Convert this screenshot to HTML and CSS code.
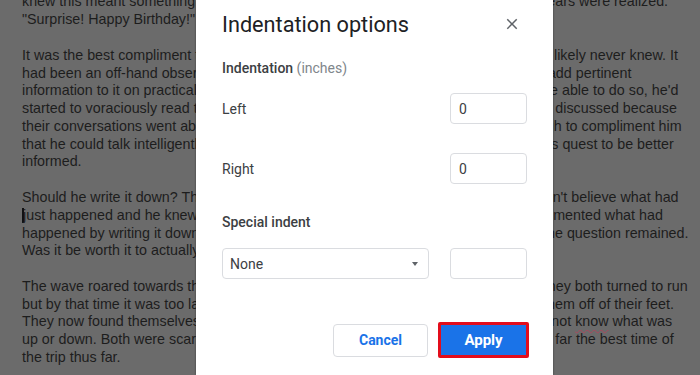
FILE: index.html
```html
<!DOCTYPE html>
<html lang="en">
<head>
<meta charset="utf-8">
<title>Indentation options</title>
<link rel="stylesheet" href="styles.css">
</head>
<body>
<div class="doc">
  <p>knew this meant something was about to happen and in that moment all her worst fears were realized.<br>"Surprise! Happy Birthday!"</p>
  <p>It was the best compliment that he'd ever received, although the person who gave it likely never knew. It<br>had been an off-hand observation on his unusual ability to hold a conversation and add pertinent<br>information to it on practically any topic. Although he hadn't consciously worked to be able to do so, he'd<br>started to voraciously read the news and view documentaries on all the topics being discussed because<br>their conversations went above his head. Soon, people were often impressed enough to compliment him<br>that he could talk intelligently on almost any topic, which was the direct product of his quest to be better<br>informed.</p>
  <p>Should he write it down? That was the question spinning through his mind. He couldn't believe what had<br><span class="caret"></span>just happened and he knew no one else would ever believe him unless he had documented what had<br>happened by writing it down. He knew everyone would still think he was crazy, yet the question remained.<br>Was it be worth it to actually write it down?</p>
  <p>The wave roared towards them with speed and intensity they had not anticipated. They both turned to run<br>but by that time it was too late. The wave crashed hard into both of them knocking them off of their feet.<br>They now found themselves in a churning washing machine of salt water and could not <span class="misspelled">know</span> what was<br>up or down. Both were scared, but they both smiled and agreed that this was still by far the best time of<br>the trip thus far.</p>
</div>

<div class="dialog">
  <div class="header">
    <div class="title">Indentation options</div>
    <svg class="close" viewBox="0 0 24 24" aria-hidden="true"><path d="M19 6.41L17.59 5 12 10.59 6.41 5 5 6.41 10.59 12 5 17.59 6.41 19 12 13.41 17.59 19 19 17.59 13.41 12z" fill="currentColor"/></svg>
  </div>
  <div class="section">Indentation <span class="muted">(inches)</span></div>
  <div class="row row-left">
    <span class="label">Left</span>
    <div class="input">0</div>
  </div>
  <div class="row row-right">
    <span class="label">Right</span>
    <div class="input">0</div>
  </div>
  <div class="section section-special">Special indent</div>
  <div class="row row-select">
    <div class="select"><span>None</span><span class="arrow"></span></div>
    <div class="input"></div>
  </div>
  <div class="footer">
    <div class="btn btn-cancel">Cancel</div>
    <div class="btn btn-apply">Apply</div>
  </div>
</div>
</body>
</html>
```

FILE: styles.css
```css
html, body {
  margin: 0;
  padding: 0;
}
body {
  display: flow-root;
  width: 700px;
  height: 375px;
  overflow: hidden;
  position: relative;
  background: #6b6b6b;
  font-family: "Liberation Sans", Arial, sans-serif;
}
.doc {
  padding-left: 22px;
  margin-top: -6.6px;
  font-size: 14.3px;
  line-height: 17.78px;
  color: #1d1d1d;
  white-space: nowrap;
}
.doc p {
  margin: 0 0 17.78px;
}
.caret {
  display: inline-block;
  width: 0;
  height: 15px;
  border-left: 2px solid #111;
  margin-right: -1px;
  vertical-align: -3px;
}
.misspelled {
  text-decoration: underline wavy #a8475c;
  text-decoration-thickness: 1px;
  text-underline-offset: 3px;
}

.dialog {
  position: absolute;
  top: 0;
  left: 196px;
  width: 357px;
  height: 375px;
  box-sizing: border-box;
  padding: 0 26px;
  background: #fff;
  box-shadow: 0 0 2px rgba(0, 0, 0, 0.45);
  font-family: Roboto, "Liberation Sans", sans-serif;
  display: flex;
  flex-direction: column;
  color: #3c4043;
}
.header {
  height: 48px;
  flex-shrink: 0;
  display: flex;
  align-items: center;
  justify-content: space-between;
}
.title {
  font-size: 21.7px;
  color: #202124;
}
.close {
  width: 18px;
  height: 18px;
  margin-right: 6px;
  color: #5f6368;
}
.section {
  margin-top: 10px;
  line-height: 20px;
  font-size: 14px;
  font-weight: 500;
  color: #3c4043;
}
.muted {
  color: #80868b;
  font-weight: 400;
}
.section-special {
  margin-top: 28px;
}
.row {
  display: flex;
  align-items: center;
  justify-content: space-between;
  height: 31px;
  flex-shrink: 0;
}
.row-left {
  margin-top: 15px;
}
.row-right {
  margin-top: 29px;
}
.row-select {
  margin-top: 16px;
}
.label {
  font-size: 14px;
  color: #3c4043;
}
.input {
  width: 77px;
  height: 31px;
  box-sizing: border-box;
  border: 1px solid #dadce0;
  border-radius: 4px;
  padding-left: 8px;
  display: flex;
  align-items: center;
  font-size: 14px;
  color: #3c4043;
}
.select {
  width: 207px;
  height: 31px;
  box-sizing: border-box;
  border: 1px solid #dadce0;
  border-radius: 4px;
  padding: 0 10px 0 7px;
  display: flex;
  align-items: center;
  justify-content: space-between;
  font-size: 14px;
  color: #3c4043;
}
.arrow {
  width: 0;
  height: 0;
  border-left: 3.5px solid transparent;
  border-right: 3.5px solid transparent;
  border-top: 4px solid #5f6368;
}
.footer {
  margin-top: 43px;
  margin-right: -2px;
  display: flex;
  justify-content: flex-end;
  align-items: center;
  gap: 10px;
}
.btn {
  box-sizing: border-box;
  display: flex;
  align-items: center;
  justify-content: center;
  font-size: 14px;
  font-weight: 700;
}
.btn-cancel {
  width: 95px;
  height: 33px;
  border: 1px solid #dadce0;
  border-radius: 4px;
  color: #1a73e8;
}
.btn-apply {
  width: 91px;
  height: 36px;
  border: 3px solid #e30d1b;
  border-radius: 2px;
  background: #1a73e8;
  color: #fff;
  font-size: 15px;
}
```
